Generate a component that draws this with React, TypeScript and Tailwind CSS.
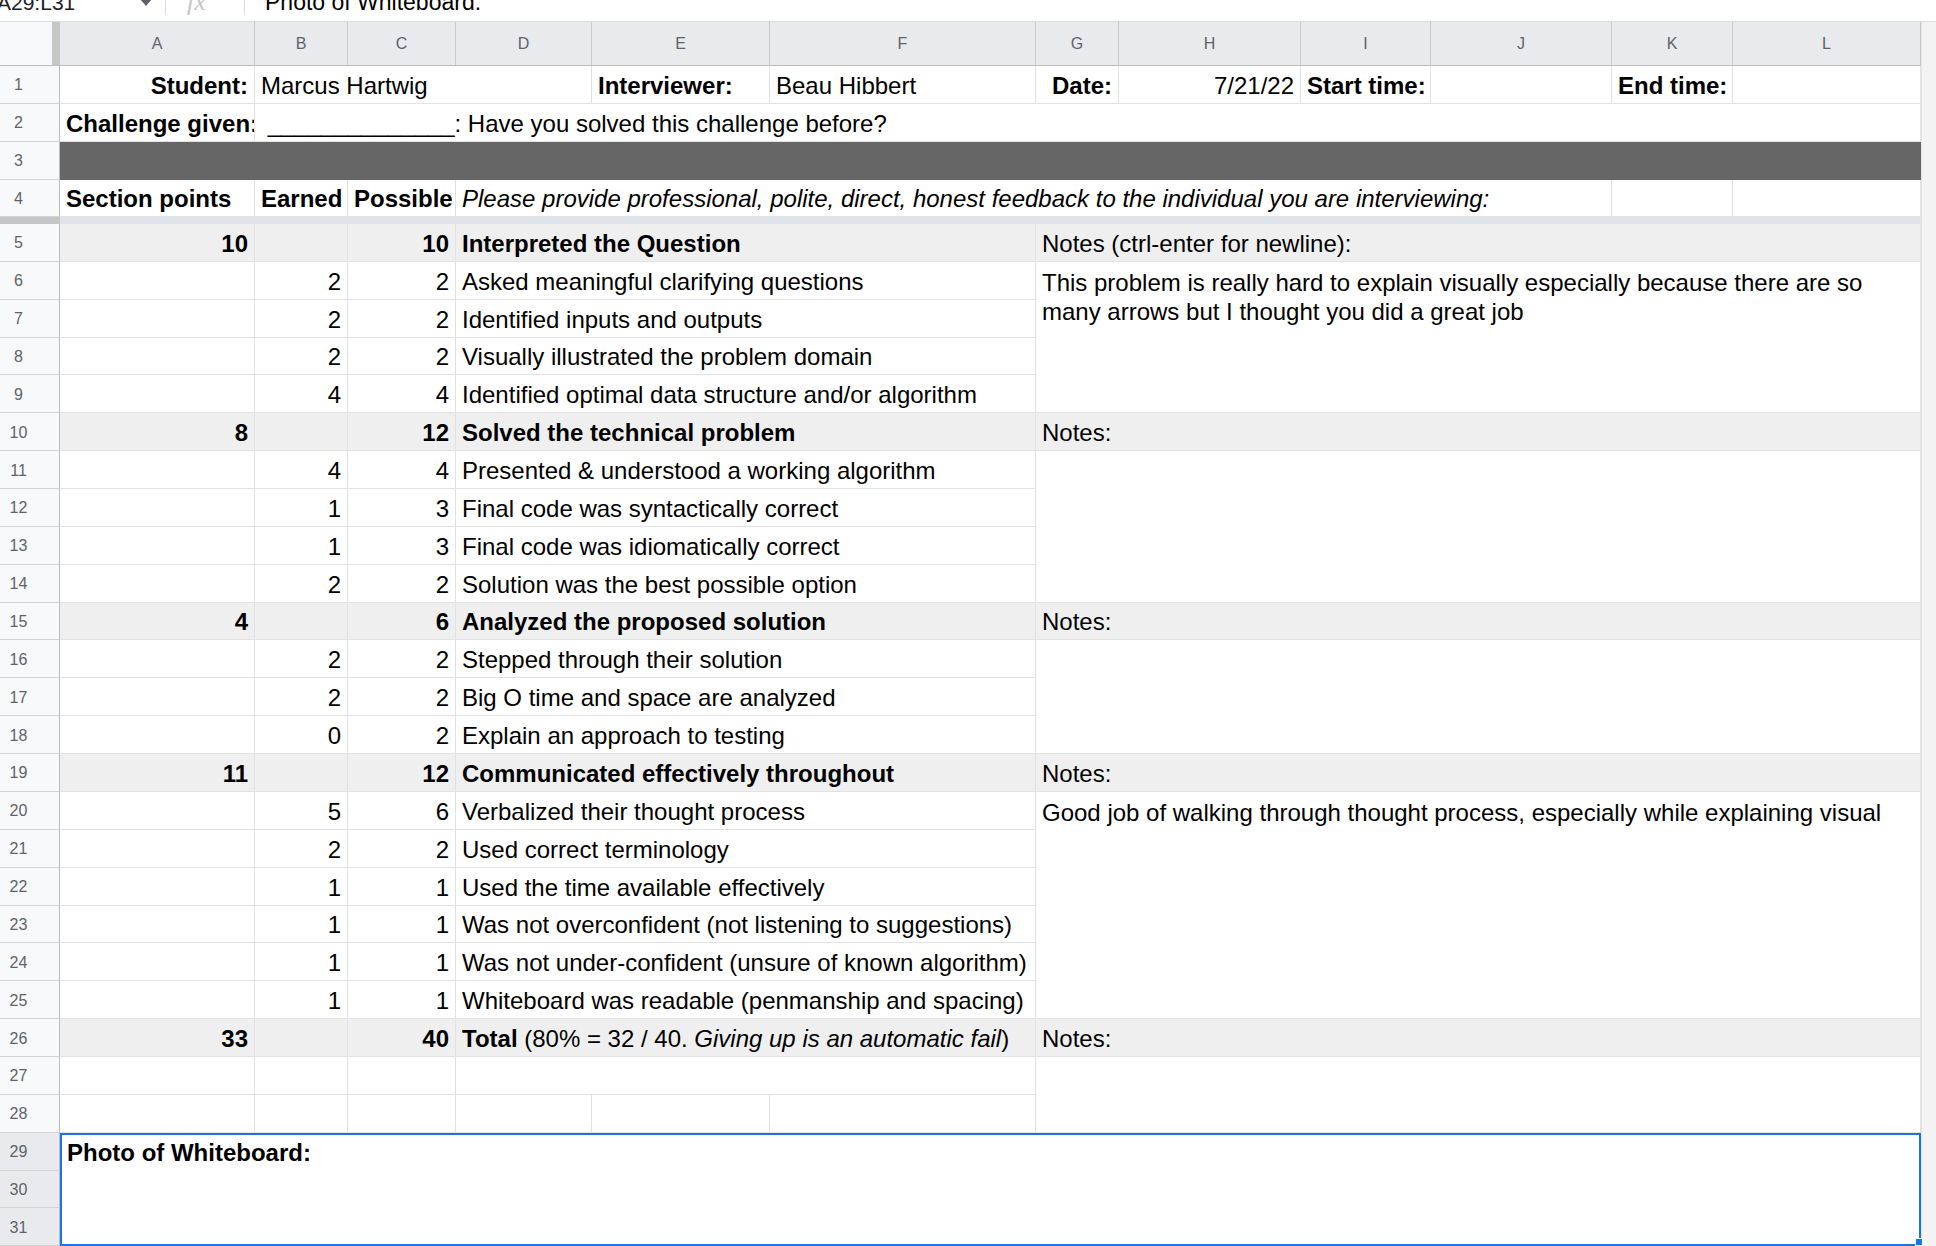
import React from "react";

const base =
  "border-r border-b border-[#e2e2e2] flex items-end pb-[3px] px-[6px] whitespace-nowrap overflow-hidden text-[24px] leading-[28px] text-black";
const sec = "bg-[#efefef]";

function Cell({ className = "", children }: { className?: string; children?: React.ReactNode }) {
  return <div className={`${base} ${className}`}>{children}</div>;
}

function RowHdr({ n, sel = false }: { n: number; sel?: boolean }) {
  return (
    <div
      className={`${sel ? "bg-[#e8eaed]" : "bg-[#f8f9fa]"} border-r border-b border-r-[#bdbdbd] border-b-[#d3d3d3] flex items-center pt-[2px]`}
    >
      <span className="w-[37px] text-center text-[16px] leading-[20px] text-[#5f6368]">{n}</span>
    </div>
  );
}

function ColHdr({ l }: { l: string }) {
  return (
    <div className="bg-[#e8eaed] border-r border-b border-r-[#c8c8c8] border-b-[#bdbdbd] flex items-center justify-center text-[16px] leading-[20px] text-[#5f6368]">
      {l}
    </div>
  );
}

type Group = {
  start: number;
  sec: [string, string, string];
  note: string;
  items: [string, string, string][];
  text: string;
  span: string;
};

const groups: Group[] = [
  {
    start: 5,
    sec: ["10", "10", "Interpreted the Question"],
    note: "Notes (ctrl-enter for newline):",
    items: [
      ["2", "2", "Asked meaningful clarifying questions"],
      ["2", "2", "Identified inputs and outputs"],
      ["2", "2", "Visually illustrated the problem domain"],
      ["4", "4", "Identified optimal data structure and/or algorithm"],
    ],
    text: "This problem is really hard to explain visually especially because there are so many arrows but I thought you did a great job",
    span: "row-span-4",
  },
  {
    start: 10,
    sec: ["8", "12", "Solved the technical problem"],
    note: "Notes:",
    items: [
      ["4", "4", "Presented & understood a working algorithm"],
      ["1", "3", "Final code was syntactically correct"],
      ["1", "3", "Final code was idiomatically correct"],
      ["2", "2", "Solution was the best possible option"],
    ],
    text: "",
    span: "row-span-4",
  },
  {
    start: 15,
    sec: ["4", "6", "Analyzed the proposed solution"],
    note: "Notes:",
    items: [
      ["2", "2", "Stepped through their solution"],
      ["2", "2", "Big O time and space are analyzed"],
      ["0", "2", "Explain an approach to testing"],
    ],
    text: "",
    span: "row-span-3",
  },
  {
    start: 19,
    sec: ["11", "12", "Communicated effectively throughout"],
    note: "Notes:",
    items: [
      ["5", "6", "Verbalized their thought process"],
      ["2", "2", "Used correct terminology"],
      ["1", "1", "Used the time available effectively"],
      ["1", "1", "Was not overconfident (not listening to suggestions)"],
      ["1", "1", "Was not under-confident (unsure of known algorithm)"],
      ["1", "1", "Whiteboard was readable (penmanship and spacing)"],
    ],
    text: "Good job of walking through thought process, especially while explaining visual",
    span: "row-span-6",
  },
];

const letters = ["A", "B", "C", "D", "E", "F", "G", "H", "I", "J", "K", "L"];

function FormulaBar() {
  return (
    <div className="h-[22px] border-b border-[#dadce0] bg-white overflow-hidden flex items-start">
      <div className="w-[165px] flex items-start justify-between">
        <span className="-ml-[3px] -mt-[9px] text-[21px] leading-[24px] text-[#202124]">A29:L31</span>
        <svg width="12" height="7" viewBox="0 0 12 7" className="mr-[13px] -mt-[1px]">
          <path d="M0 0 L12 0 L6 7 Z" fill="#5f6368" />
        </svg>
      </div>
      <div className="w-[1px] h-[15px] bg-[#dadce0]" />
      <div className="w-[78px] pl-[21px] flex items-start">
        <span className="-mt-[11px] font-['Liberation_Serif',serif] italic text-[26px] leading-[26px] text-[#c4c7c5]">
          fx
        </span>
      </div>
      <div className="w-[1px] h-[15px] bg-[#dadce0]" />
      <span className="pl-[20px] -mt-[10px] text-[23px] leading-[24px] text-black">Photo of Whiteboard:</span>
    </div>
  );
}

export default function App() {
  const rows: React.ReactNode[] = [];

  groups.forEach((g) => {
    rows.push(
      <React.Fragment key={`s${g.start}`}>
        <RowHdr n={g.start} />
        <Cell className={`${sec} justify-end font-bold border-[#dadada]`}>{g.sec[0]}</Cell>
        <Cell className={`${sec} border-[#dadada]`} />
        <Cell className={`${sec} justify-end font-bold border-[#dadada]`}>{g.sec[1]}</Cell>
        <Cell className={`${sec} col-span-3 font-bold border-[#dadada]`}>{g.sec[2]}</Cell>
        <Cell className={`${sec} col-span-6 border-[#dadada]`}>{g.note}</Cell>
      </React.Fragment>
    );
    g.items.forEach((it, i) => {
      rows.push(
        <React.Fragment key={`r${g.start + 1 + i}`}>
          <RowHdr n={g.start + 1 + i} />
          <Cell />
          <Cell className="justify-end">{it[0]}</Cell>
          <Cell className="justify-end">{it[1]}</Cell>
          <Cell className="col-span-3">{it[2]}</Cell>
          {i === 0 && (
            <div
              className={`${g.span} col-span-6 border-r border-b border-[#e2e2e2] px-[6px] pt-[6px] text-[24px] leading-[29.5px] text-black overflow-hidden`}
            >
              {g.text}
            </div>
          )}
        </React.Fragment>
      );
    });
  });

  return (
    <div className="w-[1936px] h-[1246px] overflow-hidden bg-white font-['Liberation_Sans',Arial,Helvetica,sans-serif]">
      <FormulaBar />
      <div className="flex">
        <div className="w-[1921px] grid grid-cols-[60px_195px_93px_108px_136px_178px_266px_83px_182px_130px_181px_121px_188px] grid-rows-[44px_repeat(4,37.86px)_6.6px_repeat(27,37.86px)]">
          {/* header row */}
          <div className="flex border-b border-[#bdbdbd]">
            <div className="flex-1 bg-[#f8f9fa]" />
            <div className="w-[8px] bg-[#c4c7c5]" />
          </div>
          {letters.map((l) => (
            <ColHdr key={l} l={l} />
          ))}

          {/* row 1 */}
          <RowHdr n={1} />
          <Cell className="justify-end font-bold">Student:</Cell>
          <Cell className="col-span-3">Marcus Hartwig</Cell>
          <Cell className="font-bold">Interviewer:</Cell>
          <Cell>Beau Hibbert</Cell>
          <Cell className="justify-end font-bold">Date:</Cell>
          <Cell className="justify-end">7/21/22</Cell>
          <Cell className="font-bold">Start time:</Cell>
          <Cell />
          <Cell className="font-bold">End time:</Cell>
          <Cell />

          {/* row 2 */}
          <RowHdr n={2} />
          <Cell className="font-bold">Challenge given:</Cell>
          <Cell className="col-span-11 whitespace-pre">{" ______________: Have you solved this challenge before?"}</Cell>

          {/* row 3 */}
          <RowHdr n={3} />
          <div className="col-span-12 bg-[#666666] border-r border-[#666666]" />

          {/* row 4 */}
          <RowHdr n={4} />
          <Cell className="font-bold">Section points</Cell>
          <Cell className="font-bold">Earned</Cell>
          <Cell className="font-bold">Possible</Cell>
          <Cell className="col-span-7 italic">
            Please provide professional, polite, direct, honest feedback to the individual you are interviewing:
          </Cell>
          <Cell />
          <Cell />

          {/* frozen divider */}
          <div className="bg-[#c6c6c6]" />
          <div className="col-span-12 bg-[#dfe3ea]" />

          {rows}

          {/* row 26 */}
          <RowHdr n={26} />
          <Cell className={`${sec} justify-end font-bold border-[#dadada]`}>33</Cell>
          <Cell className={`${sec} border-[#dadada]`} />
          <Cell className={`${sec} justify-end font-bold border-[#dadada]`}>40</Cell>
          <Cell className={`${sec} col-span-3 border-[#dadada] whitespace-pre`}>
            <span className="font-bold">Total</span>
            {" (80% = 32 / 40. "}
            <span className="italic">Giving up is an automatic fail</span>
            {")"}
          </Cell>
          <Cell className={`${sec} col-span-6 border-[#dadada]`}>Notes:</Cell>

          {/* row 27 */}
          <RowHdr n={27} />
          <Cell />
          <Cell />
          <Cell />
          <Cell className="col-span-3" />
          <div className="col-span-6 row-span-2 border-r border-b border-[#e2e2e2]" />

          {/* row 28 */}
          <RowHdr n={28} />
          <Cell />
          <Cell />
          <Cell />
          <Cell />
          <Cell />
          <Cell />

          {/* rows 29-31 */}
          <RowHdr n={29} sel />
          <div className="relative col-span-12 row-span-3 border-2 border-[#1a73e8] pl-[5px] pt-[4px] text-[24px] leading-[28px] font-bold text-black">
            Photo of Whiteboard:
            <div className="absolute right-[-4px] bottom-[-2px] w-[8px] h-[8px] bg-[#1a73e8] border border-white" />
          </div>
          <RowHdr n={30} sel />
          <RowHdr n={31} sel />
        </div>
        <div className="w-[15px] h-[1224px] bg-[#f3f3f3] border-l border-[#e3e3e3]" />
      </div>
    </div>
  );
}
